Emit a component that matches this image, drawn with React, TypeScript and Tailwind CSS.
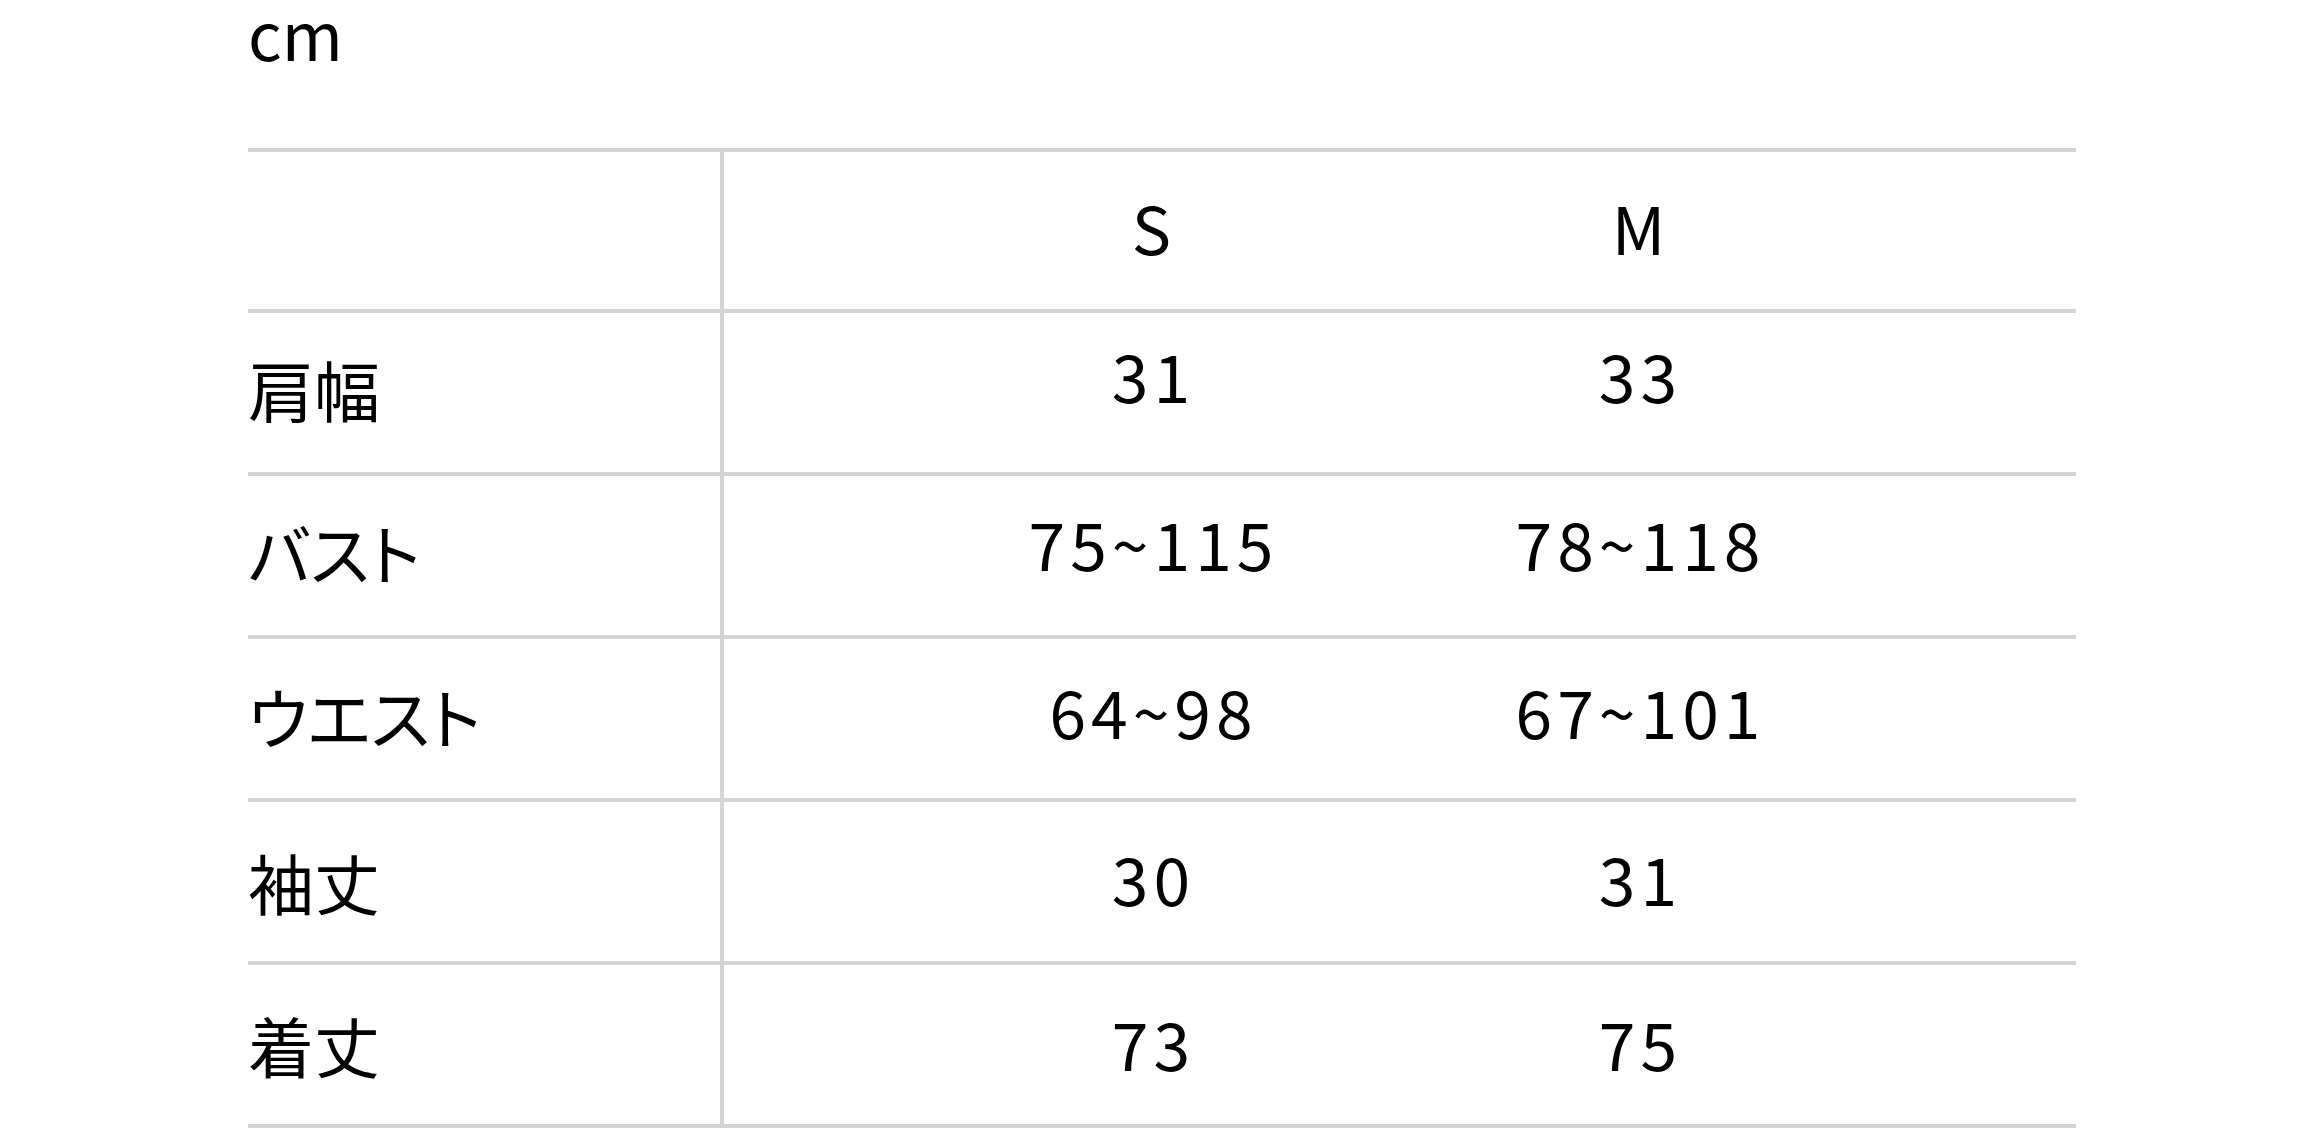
import React from "react";

const rows: { label: string; s: string; m: string; lp: string; dp: string }[] = [
  { label: "肩幅", s: "31", m: "33", lp: "pb-[8px]", dp: "pb-[36px]" },
  { label: "バスト", s: "75~115", m: "78~118", lp: "pb-[8px]", dp: "pb-[26px]" },
  { label: "ウエスト", s: "64~98", m: "67~101", lp: "pb-[6px]", dp: "pb-[16px]" },
  { label: "袖丈", s: "30", m: "31", lp: "pb-[0px]", dp: "pb-[8px]" },
  { label: "着丈", s: "73", m: "75", lp: "pb-[0px]", dp: "pb-[4px]" },
];

export default function App() {
  return (
    <div className="w-[2320px] h-[1147px] overflow-hidden bg-white text-black font-['Noto_Sans_CJK_JP','Noto_Sans',sans-serif] text-[66px]">
      <div className="pl-[248px] leading-[64px]">cm</div>
      <div className="ml-[248px] mt-[84px] w-[1828px] border-t-4 border-[#d4d4d4]">
        <div className="grid grid-cols-[472px_1fr] h-[161px] border-b-4 border-[#d4d4d4]">
          <div />
          <div className="border-l-4 border-[#d4d4d4] pl-[184px] grid grid-cols-[487px_487px] items-center pb-[8px]">
            <div className="text-center">S</div>
            <div className="text-center">M</div>
          </div>
        </div>
        {rows.map((r) => (
          <div
            key={r.label}
            className="grid grid-cols-[472px_1fr] h-[163px] border-b-4 border-[#d4d4d4]"
          >
            <div className={`flex items-center [font-feature-settings:'palt'] ${r.lp}`}>{r.label}</div>
            <div className={`border-l-4 border-[#d4d4d4] pl-[186px] grid grid-cols-[487px_487px] items-center tracking-[5px] ${r.dp}`}>
              <div className="text-center">{r.s}</div>
              <div className="text-center">{r.m}</div>
            </div>
          </div>
        ))}
      </div>
    </div>
  );
}
